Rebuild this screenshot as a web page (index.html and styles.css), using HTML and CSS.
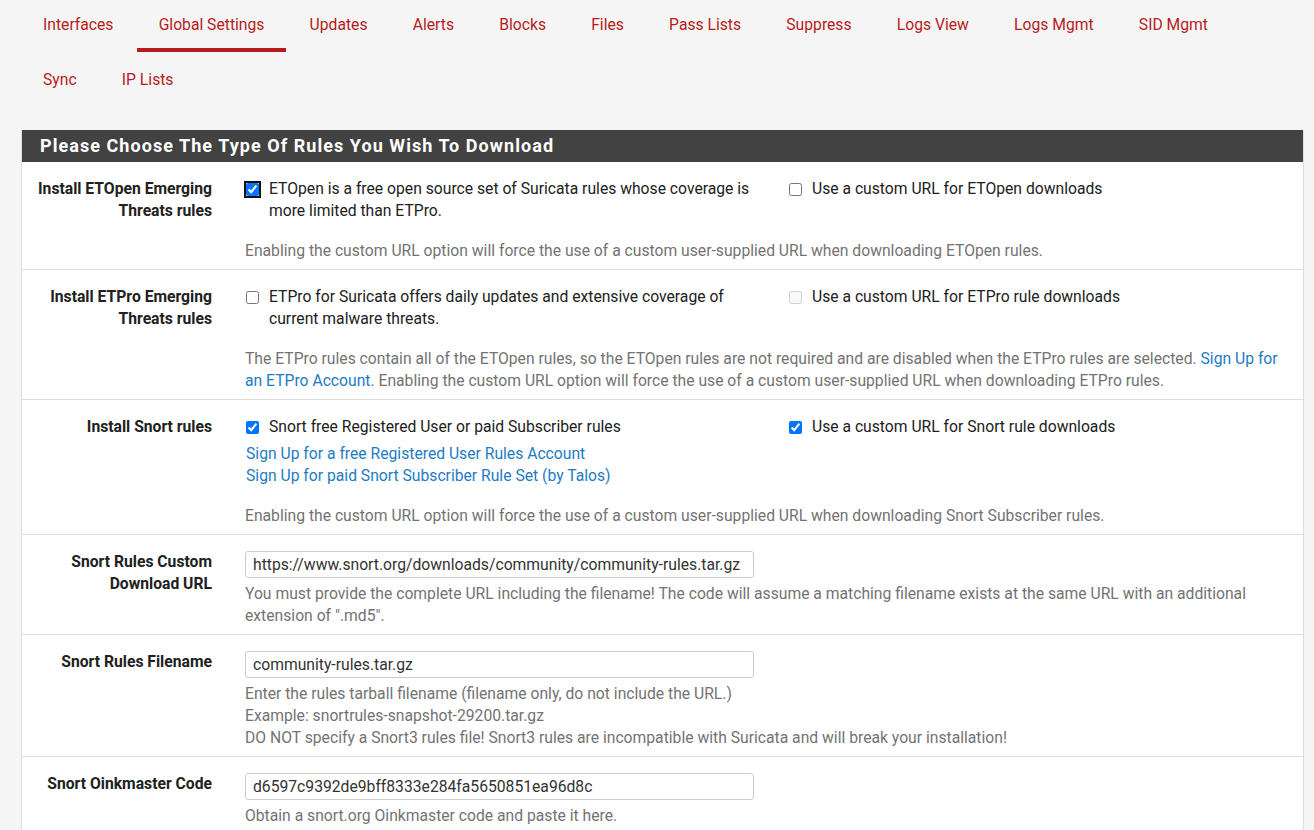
FILE: index.html
```html
<!DOCTYPE html>
<html>
<head>
<meta charset="utf-8">
<link rel="stylesheet" href="styles.css">
</head>
<body>
<nav class="tabs">
  <a class="tab">Interfaces</a>
  <a class="tab active">Global Settings</a>
  <a class="tab">Updates</a>
  <a class="tab">Alerts</a>
  <a class="tab">Blocks</a>
  <a class="tab">Files</a>
  <a class="tab">Pass Lists</a>
  <a class="tab">Suppress</a>
  <a class="tab">Logs View</a>
  <a class="tab">Logs Mgmt</a>
  <a class="tab">SID Mgmt</a>
  <a class="tab">Sync</a>
  <a class="tab">IP Lists</a>
</nav>

<section class="panel">
  <h2 class="panel-title">Please Choose The Type Of Rules You Wish To Download</h2>

  <div class="row">
    <div class="label">Install ETOpen Emerging Threats rules</div>
    <div class="content">
      <div class="options">
        <label class="check"><input type="checkbox" class="focused" checked><span>ETOpen is a free open source set of Suricata rules whose coverage is more limited than ETPro.</span></label>
        <label class="check"><input type="checkbox"><span>Use a custom URL for ETOpen downloads</span></label>
      </div>
      <p class="help gap">Enabling the custom URL option will force the use of a custom user-supplied URL when downloading ETOpen rules.</p>
    </div>
  </div>

  <div class="row">
    <div class="label">Install ETPro Emerging Threats rules</div>
    <div class="content">
      <div class="options">
        <label class="check"><input type="checkbox"><span>ETPro for Suricata offers daily updates and extensive coverage of current malware threats.</span></label>
        <label class="check"><input type="checkbox" disabled><span>Use a custom URL for ETPro rule downloads</span></label>
      </div>
      <p class="help gap">The ETPro rules contain all of the ETOpen rules, so the ETOpen rules are not required and are disabled when the ETPro rules are selected. <a class="link">Sign Up for an ETPro Account</a>. Enabling the custom URL option will force the use of a custom user-supplied URL when downloading ETPro rules.</p>
    </div>
  </div>

  <div class="row">
    <div class="label">Install Snort rules</div>
    <div class="content">
      <div class="options">
        <div class="col">
          <label class="check"><input type="checkbox" checked><span>Snort free Registered User or paid Subscriber rules</span></label>
          <div class="links">
            <a class="link">Sign Up for a free Registered User Rules Account</a>
            <a class="link">Sign Up for paid Snort Subscriber Rule Set (by Talos)</a>
          </div>
        </div>
        <label class="check"><input type="checkbox" checked><span>Use a custom URL for Snort rule downloads</span></label>
      </div>
      <p class="help gap">Enabling the custom URL option will force the use of a custom user-supplied URL when downloading Snort Subscriber rules.</p>
    </div>
  </div>

  <div class="row">
    <div class="label">Snort Rules Custom Download URL</div>
    <div class="content">
      <input class="field" type="text" value="https://www.snort.org/downloads/community/community-rules.tar.gz">
      <p class="help near">You must provide the complete URL including the filename! The code will assume a matching filename exists at the same URL with an additional extension of ".md5".</p>
    </div>
  </div>

  <div class="row">
    <div class="label">Snort Rules Filename</div>
    <div class="content">
      <input class="field" type="text" value="community-rules.tar.gz">
      <p class="help near">Enter the rules tarball filename (filename only, do not include the URL.)<br>Example: snortrules-snapshot-29200.tar.gz<br>DO NOT specify a Snort3 rules file! Snort3 rules are incompatible with Suricata and will break your installation!</p>
    </div>
  </div>

  <div class="row">
    <div class="label">Snort Oinkmaster Code</div>
    <div class="content">
      <input class="field" type="text" value="d6597c9392de9bff8333e284fa5650851ea96d8c">
      <p class="help near">Obtain a snort.org Oinkmaster code and paste it here.</p>
    </div>
  </div>
</section>
</body>
</html>
```

FILE: styles.css
```css
html, body {
  margin: 0;
  padding: 0;
}

body {
  background: #f5f5f5;
  font-family: Roboto, "Liberation Sans", Arial, sans-serif;
  font-size: 15.7px;
  line-height: 22px;
  color: #212121;
  padding: 0 10px 40px 21px;
}

.tabs {
  display: flex;
  flex-wrap: wrap;
  column-gap: 1.2px;
  row-gap: 3px;
}

.tab {
  display: block;
  padding: 15px 22px 13px;
  line-height: 20px;
  font-size: 15.7px;
  color: #b71c1c;
  border-bottom: 4px solid transparent;
  cursor: pointer;
}

.tab.active {
  border-bottom-color: #b71c1c;
}

.panel {
  margin-top: 23px;
  background: #fff;
  border: 1px solid #dddddd;
  border-top: 0;
}

.panel-title {
  margin: 0;
  height: 32px;
  line-height: 32px;
  background: #424242;
  color: #fff;
  font-size: 18px;
  font-weight: 700;
  letter-spacing: 1.05px;
  padding-left: 18px;
}

.row {
  display: grid;
  grid-template-columns: 190px 1fr;
  column-gap: 33px;
  padding: 16px 14px 7px 0;
  border-top: 1px solid #dddddd;
}

.panel-title + .row {
  border-top: 0;
}

.label {
  text-align: right;
  font-weight: 700;
  color: #212121;
}

.options {
  display: grid;
  grid-template-columns: 530px 1fr;
  column-gap: 13px;
}

.check {
  display: flex;
  align-items: flex-start;
}

.check input {
  flex: none;
  width: 13px;
  height: 13px;
  margin: 5px 10px 0 1px;
}

.check input.focused {
  outline: 2px solid #101010;
  outline-offset: 0;
  border-radius: 2px;
}

.links {
  display: flex;
  flex-direction: column;
  margin-top: 5px;
  padding-left: 1px;
}

.link {
  color: #1e7bc4;
  cursor: pointer;
}

.help {
  margin: 0;
  color: #737373;
}

.help.gap {
  margin-top: 18px;
}

.help.near {
  margin-top: 5px;
}

.field {
  display: block;
  box-sizing: border-box;
  width: 509px;
  height: 27px;
  margin: 0;
  padding: 0 7px;
  border: 1px solid #cccccc;
  border-radius: 3px;
  background: #fff;
  font-family: Roboto, "Liberation Sans", Arial, sans-serif;
  font-size: 15.7px;
  color: #333;
}
```
